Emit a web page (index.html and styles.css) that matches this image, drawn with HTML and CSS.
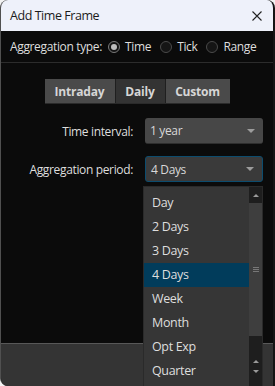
FILE: index.html
```html
<!doctype html>
<html>
    <head>
        <title>Add Time Frame</title>
        <link rel="stylesheet" href="styles.css">
    </head>
    <body>
        <div class="win">
            <header class="titlebar">
                <span class="title">Add Time Frame</span>
                <svg class="close" width="10" height="10" viewBox="0 0 10 10">
                    <path d="M0.5 0.5 L9.5 9.5 M9.5 0.5 L0.5 9.5" stroke="#222" stroke-width="1.1" fill="none"/>
                </svg>
            </header>
            <div class="typebar">
                <span class="label">Aggregation type:</span>
                <label class="radio"><span class="dot checked"></span>Time</label>
                <label class="radio"><span class="dot"></span>Tick</label>
                <label class="radio"><span class="dot"></span>Range</label>
            </div>
            <main class="content">
                <div class="tabs">
                    <button type="button" class="tab">Intraday</button>
                    <button type="button" class="tab active">Daily</button>
                    <button type="button" class="tab">Custom</button>
                </div>
                <div class="fields">
                    <span class="flabel">Time interval:</span>
                    <div class="select">1 year<span class="arrow"></span></div>
                    <span class="flabel">Aggregation period:</span>
                    <div class="select open">4 Days<span class="arrow"></span></div>
                </div>
            </main>
            <footer class="footer"></footer>

            <div class="list">
                <ul class="items">
                    <li>Day</li>
                    <li>2 Days</li>
                    <li>3 Days</li>
                    <li class="sel">4 Days</li>
                    <li>Week</li>
                    <li>Month</li>
                    <li>Opt Exp</li>
                    <li>Quarter</li>
                </ul>
                <div class="scroll">
                    <div class="sbtn"><span class="up"></span></div>
                    <div class="thumb"><span class="grip"></span></div>
                    <div class="sbtm"><span class="up"></span><span class="down"></span></div>
                </div>
            </div>
        </div>
    </body>
</html>
```
FILE: styles.css
```css
* {
    box-sizing: border-box;
}
html,
body {
    margin: 0;
    padding: 0;
    height: 100%;
    background-color: #f3f3f3;
}
body {
    font-family: "Open Sans", sans-serif;
    font-size: 12px;
    letter-spacing: -0.35px;
    color: #dedede;
}
.win {
    position: relative;
    width: 275px;
    height: 386px;
    display: flex;
    flex-direction: column;
    background-color: #0b0b0b;
    border-left: 1px solid #505050;
    border-right: 2px solid #151515;
    border-radius: 8px 8px 0 8px;
    overflow: hidden;
}
.titlebar {
    height: 31px;
    flex-shrink: 0;
    display: flex;
    align-items: center;
    justify-content: space-between;
    padding: 0 11px 0 9px;
    background-color: #eef1fa;
    color: #1b1b1b;
}
.title {
    font-size: 12.5px;
    letter-spacing: -0.45px;
}
.typebar {
    height: 32px;
    flex-shrink: 0;
    display: flex;
    align-items: center;
    padding: 0 0 0 9px;
    border-bottom: 1px solid #2c2c2c;
}
.typebar .label {
    margin-right: 6px;
}
.radio {
    display: flex;
    align-items: center;
    margin-right: 9px;
}
.dot {
    width: 12px;
    height: 12px;
    margin-right: 5px;
    border-radius: 50%;
    border: 1px solid #4a4a4a;
    background-color: #151515;
    display: flex;
    align-items: center;
    justify-content: center;
}
.dot.checked {
    border-color: #7a7a7a;
}
.dot.checked::after {
    content: "";
    width: 6px;
    height: 6px;
    border-radius: 50%;
    background-color: #bdbdbd;
}
.content {
    flex: 1;
    display: flex;
    flex-direction: column;
    align-items: center;
    padding-top: 16px;
}
.tabs {
    display: flex;
    gap: 1px;
    background-color: #1f1f1f;
    border-bottom: 1px solid #2a2a2a;
}
.tab {
    height: 24px;
    border: none;
    padding: 0;
    font-family: "Open Sans", sans-serif;
    font-size: 12px;
    font-weight: 700;
    letter-spacing: -0.2px;
    color: #d6d6d6;
    background-color: #4a4a4a;
}
.tab:first-child {
    width: 70px;
}
.tab.active {
    width: 49px;
    background-color: #333;
}
.tab:last-child {
    width: 64px;
}
.fields {
    margin-top: 14px;
    width: 100%;
    display: grid;
    grid-template-columns: 132px 118px;
    column-gap: 12px;
    row-gap: 12px;
    align-items: center;
}
.flabel {
    text-align: right;
}
.select {
    height: 26px;
    display: flex;
    align-items: center;
    justify-content: space-between;
    padding: 0 8px 0 5px;
    border-radius: 3px;
    background-color: #474747;
    border-bottom: 1px solid #2e2e2e;
    color: #d8d8d8;
}
.select.open {
    background-color: #3a3a3a;
    border: 1px solid #0c4c6e;
}
.arrow {
    width: 0;
    height: 0;
    border-left: 4px solid transparent;
    border-right: 4px solid transparent;
    border-top: 4px solid #9c9c9c;
}
.footer {
    height: 43px;
    flex-shrink: 0;
    background-color: #343434;
    border-top: 1px solid #585858;
}
.list {
    position: absolute;
    top: 187px;
    left: 143px;
    width: 118px;
    height: 210px;
    display: flex;
    background-color: #363636;
    box-shadow: 0 0 0 1px #2a2a2a;
}
.items {
    flex: 1;
    list-style: none;
    margin: 0;
    padding: 4px 0 0 0;
}
.items li {
    height: 24px;
    line-height: 24px;
    padding-left: 8px;
    font-size: 12.5px;
    color: #dedede;
}
.items li.sel {
    background-color: #013c5b;
}
.scroll {
    width: 13px;
    display: flex;
    flex-direction: column;
    background-color: #3d3d3d;
}
.sbtn {
    height: 16px;
    background-color: #1e1e1e;
    display: flex;
    justify-content: center;
    align-items: center;
}
.thumb {
    height: 133px;
    background-color: #3e3e3e;
    display: flex;
    justify-content: center;
    align-items: center;
}
.grip {
    width: 6px;
    height: 5px;
    border-top: 1px solid #777;
    border-bottom: 1px solid #777;
    position: relative;
}
.grip::after {
    content: "";
    position: absolute;
    left: 0;
    right: 0;
    top: 1px;
    border-top: 1px solid #777;
}
.sbtm {
    flex: 1;
    background-color: #1e1e1e;
    display: flex;
    flex-direction: column;
    align-items: center;
    padding-top: 24px;
    gap: 7px;
}
.up {
    width: 0;
    height: 0;
    border-left: 3px solid transparent;
    border-right: 3px solid transparent;
    border-bottom: 3px solid #9a9a9a;
}
.down {
    width: 0;
    height: 0;
    border-left: 3px solid transparent;
    border-right: 3px solid transparent;
    border-top: 3px solid #9a9a9a;
}
```
